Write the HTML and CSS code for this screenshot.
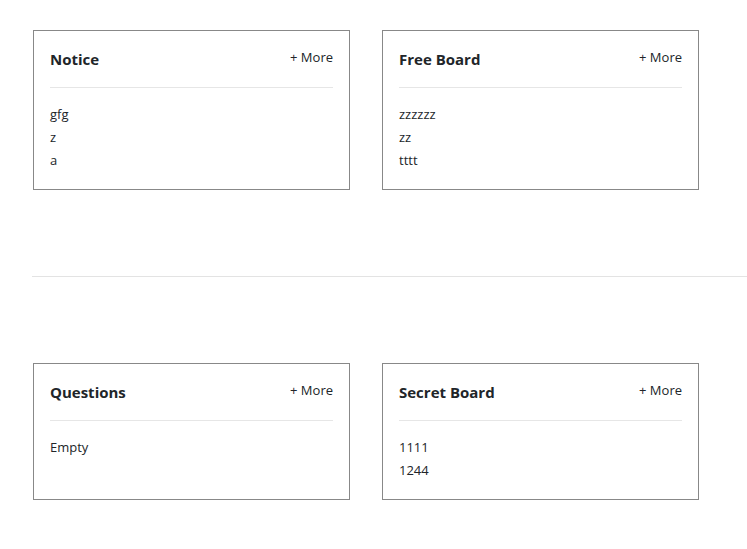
FILE: index.html
```html
<!DOCTYPE html>
<html>
<head>
<meta charset="utf-8">
<link rel="stylesheet" href="styles.css">
</head>
<body>
<section class="row row-top">
  <div class="card">
    <div class="card-head"><h2 class="title">Notice</h2><a class="more">+ More</a></div>
    <ul class="list"><li>gfg</li><li>z</li><li>a</li></ul>
  </div>
  <div class="card">
    <div class="card-head"><h2 class="title">Free Board</h2><a class="more">+ More</a></div>
    <ul class="list"><li>zzzzzz</li><li>zz</li><li>tttt</li></ul>
  </div>
</section>
<hr class="page-rule">
<section class="row row-bottom">
  <div class="card">
    <div class="card-head"><h2 class="title">Questions</h2><a class="more">+ More</a></div>
    <ul class="list"><li>Empty</li></ul>
  </div>
  <div class="card">
    <div class="card-head"><h2 class="title">Secret Board</h2><a class="more">+ More</a></div>
    <ul class="list"><li>1111</li><li>1244</li></ul>
  </div>
</section>
</body>
</html>
```
FILE: styles.css
```css
html, body {
  margin: 0;
  padding: 0;
  background: #fff;
  font-family: "Open Sans", "Noto Sans", sans-serif;
  color: #212529;
  overflow: hidden;
}
.row {
  display: flex;
  align-items: stretch;
  gap: 32px;
  padding-left: 33px;
}
.row-top { padding-top: 30px; }
.page-rule {
  border: 0;
  border-top: 1px solid #e3e3e3;
  margin: 86px 0 86px 32px;
  height: 0;
}
.card {
  box-sizing: border-box;
  width: 317px;
  border: 1px solid #888;
  padding: 16px 16px 17px;
}
.card-head {
  display: flex;
  justify-content: space-between;
  align-items: center;
  height: 24px;
  padding-bottom: 16px;
  border-bottom: 1px solid #e6e6e6;
}
.title {
  margin: 0;
  font-size: 15px;
  font-weight: 700;
  line-height: 24px;
}
.more {
  font-size: 13px;
  line-height: 20px;
  color: #212529;
  cursor: pointer;
  position: relative;
  top: -2px;
}
.list {
  list-style: none;
  margin: 0;
  padding: 15px 0 0;
  font-size: 13px;
  line-height: 23px;
}
```
